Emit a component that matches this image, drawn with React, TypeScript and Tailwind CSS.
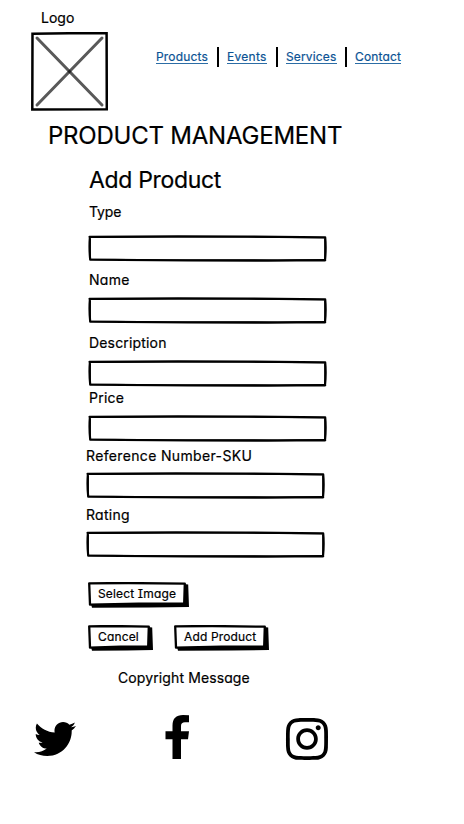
import type { ReactNode } from "react";
import { FaInstagram, FaTwitter } from "react-icons/fa";

const links = [
  { label: "Products", width: "w-[52px]", gap: "mr-[9px]", track: "tracking-[0.17px]" },
  { label: "Events", width: "w-[40px]", gap: "ml-[8px] mr-[9px]", track: "tracking-[0.3px]" },
  { label: "Services", width: "w-[51px]", gap: "mx-[8px]", track: "tracking-[0.14px]" },
  { label: "Contact", width: "w-[46px]", gap: "ml-[8px]", track: "tracking-[0.14px]" },
];

const fields = [
  { label: "Type", row: "h-[31px]", box: "mb-[10px]", shift: "", text: "-mt-px tracking-[-0.1px]" },
  { label: "Name", row: "h-[25px]", box: "mb-[10px]", shift: "", text: "-mt-px tracking-[0.3px]" },
  { label: "Description", row: "h-[26px]", box: "mb-[3px]", shift: "", text: "tracking-[0.17px]" },
  { label: "Price", row: "h-[25px]", box: "mb-[5px]", shift: "", text: "-mt-px tracking-[0.25px]" },
  { label: "Reference Number-SKU", row: "h-[25px]", box: "mb-[7px]", shift: "-ml-[2px]", text: "-ml-px tracking-[0.35px]" },
  { label: "Rating", row: "h-[25px]", box: "", shift: "-ml-[2px]", text: "-ml-px tracking-[0.3px]" },
];

function FieldBox({ label }: { label: string }) {
  return (
    <div className="relative h-[27px] w-[239px]">
      <svg className="absolute inset-0" width="239" height="27" viewBox="0 0 239 27" fill="none" aria-hidden="true">
        <path d="M1.5 1.9L90 1.3L160 1.5L237.2 2.3M1.9 2Q1 13 2.2 24.7M2.2 24.7L100 25.5L180 25.7L237.2 25.2M237.2 2.4Q238.2 13 237 25.4" stroke="#000" strokeWidth="2.2" strokeLinecap="round" strokeLinejoin="round" />
        <path d="M2 2.3L80 2L165 2.2L237 2.6M2 24.4L80 24.8L190 25L237 24.7M2.3 4V23M236.8 4V24" stroke="#000" strokeWidth="1.2" />
      </svg>
      <input aria-label={label} className="relative h-full w-full bg-transparent px-2 outline-none" />
    </div>
  );
}

function SketchButton({ width, className, children }: { width: number; className: string; children: ReactNode }) {
  const r = width - 4;
  return (
    <button className={`relative flex h-[26px] items-center pb-[2px] text-[12px] leading-[14px] ${className}`}>
      <svg className="absolute inset-0" width={width} height="26" viewBox={`0 0 ${width} 26`} aria-hidden="true">
        <path d={`M3 22L${r - 2} 21L${r - 1} 2L${width - 0.8} 2.4L${width} 25L${width * 0.6} 25.4L4 25.8Z`} fill="#000" />
        <path d={`M1.2 1.3L${width * 0.4} 1L${r - 0.2} 1.7L${r - 0.8} 21.6L${width * 0.5} 21.6L2 22.6Z`} fill="#fff" stroke="#000" strokeWidth="2.3" strokeLinejoin="round" />
      </svg>
      <span className="relative whitespace-nowrap tracking-[0.15px]">{children}</span>
    </button>
  );
}

export default function App() {
  return (
    <main className="h-[824px] w-[464px] overflow-hidden bg-white font-['Inter',sans-serif] text-[14px] leading-[18px] text-black [-webkit-text-stroke:0.2px] [font-feature-settings:'cv11','cv08']">
      <header className="flex h-[121px] items-start">
        <div className="ml-[31px] w-[125px] shrink-0 pt-[9px]">
          <div className="ml-[10px] h-[23px]">Logo</div>
          <svg width="77" height="79" viewBox="0 0 77 79" fill="none" aria-label="Logo">
            <path d="M1.5 1.7L38 1.3L75.6 1.3L75.8 77.2L1.3 77.5Z" stroke="#000" strokeWidth="2.5" />
            <path d="M6 6L71 73" stroke="#000" strokeOpacity="0.65" strokeWidth="3" strokeLinecap="round" />
            <path d="M71 6L6 73" stroke="#000" strokeOpacity="0.65" strokeWidth="3" strokeLinecap="round" />
          </svg>
        </div>
        <nav className="mt-[47px] flex items-center text-[12px] leading-[14px] text-[#0b5394]">
          {links.map((link, i) => (
            <div key={link.label} className="flex items-center">
              {i > 0 && <span className="h-[20px] w-[2px] bg-black" />}
              <div className={link.gap}>
                <a href="#" className={`block h-[14px] whitespace-nowrap border-b border-[#2c6da5] leading-[13px] ${link.width} ${link.track}`}>{link.label}</a>
              </div>
            </div>
          ))}
        </nav>
      </header>
      <h1 className="ml-[48px] h-[44px] whitespace-nowrap text-[24px] leading-[30px] tracking-[-0.22px]">PRODUCT MANAGEMENT</h1>
      <section className="ml-[88px]">
        <h2 className="ml-px h-[39px] text-[23px] leading-[30px] tracking-[-0.33px]">Add Product</h2>
        {fields.map((field) => (
          <div key={field.label} className={`${field.shift} ${field.box}`}>
            <div className={`flex pl-px ${field.row}`}>
              <span className={`whitespace-nowrap ${field.text}`}>{field.label}</span>
            </div>
            <FieldBox label={field.label} />
          </div>
        ))}
        <div className="mt-[24px] flex flex-col gap-[17px]">
          <SketchButton width={101} className="w-[101px] pl-[10px]">Select Image</SketchButton>
          <div className="flex gap-[21px]">
            <SketchButton width={65} className="w-[65px] pl-[10px]">Cancel</SketchButton>
            <SketchButton width={95} className="w-[95px] pl-[10px]">Add Product</SketchButton>
          </div>
        </div>
      </section>
      <footer>
        <p className="ml-[118px] mt-[18px] h-[45px] tracking-[0.11px]">Copyright Message</p>
        <div className="flex h-[46px] items-center">
          <FaTwitter className="ml-[34px] mt-[4px] h-[42px] w-[42px]" />
          <svg className="ml-[89px] h-[44px] w-[25px]" viewBox="0 0 25 44" aria-label="Facebook">
            <path d="M24 .3V7.3H20Q16 7.3 16 11V16.2H24L23 24.2H16V44H7.5V24.2H.5V16.2H7.5V10.5Q7.5 0 18 0Q22 0 24 .3Z" />
          </svg>
          <FaInstagram className="ml-[93px] mt-[4px] h-[48px] w-[48px]" />
        </div>
      </footer>
    </main>
  );
}
